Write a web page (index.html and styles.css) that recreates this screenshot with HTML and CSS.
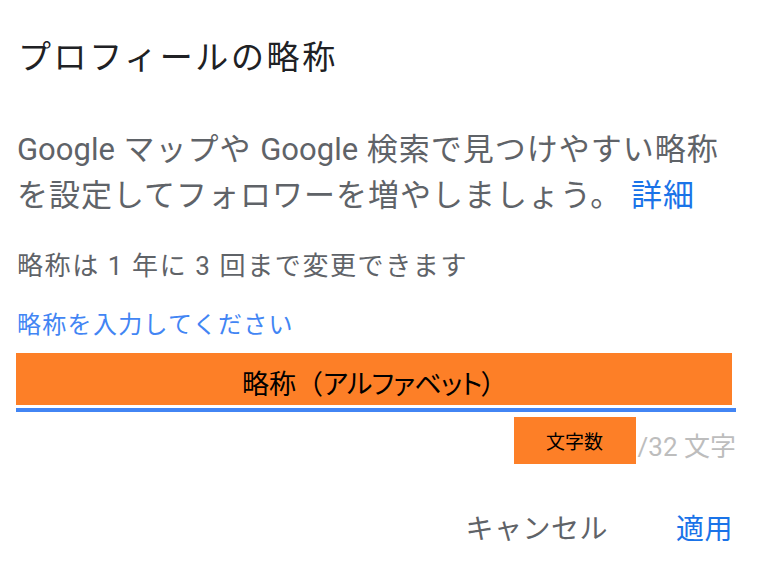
FILE: index.html
```html
<!DOCTYPE html>
<html lang="ja">
<head>
<meta charset="utf-8">
<title>プロフィールの略称</title>
<link rel="stylesheet" href="styles.css">
</head>
<body>
<div class="dialog">
  <h1 class="title">プロフィールの略称</h1>
  <p class="desc"><span class="en">Google</span> マップや <span class="en">Google</span> 検索で見つけやすい略称を設定してフォロワーを増やしましょう。 <a class="link" href="#">詳細</a></p>
  <p class="note">略称は 1 年に 3 回まで変更できます</p>
  <div class="field">
    <div class="label">略称を入力してください</div>
    <div class="input"><span>略称（<span class="kana">アルファベット）</span></span></div>
    <div class="underline"></div>
    <div class="helper">
      <span class="count">文字数</span><span class="max">/32 文字</span>
    </div>
  </div>
  <div class="actions">
    <span class="btn cancel">キャンセル</span>
    <span class="btn apply">適用</span>
  </div>
</div>
</body>
</html>
```

FILE: styles.css
```css
html, body {
  margin: 0;
  padding: 0;
  background: #ffffff;
}
body {
  font-family: Roboto, "Noto Sans CJK JP", sans-serif;
  width: 762px;
  height: 571px;
  overflow: hidden;
}
.dialog {
  display: flex;
  flex-direction: column;
  padding: 36px 26px 0 17px;
}
.title {
  margin: 0 0 0 1px;
  font-size: 33px;
  font-weight: 400;
  color: #202124;
  line-height: 44px;
  letter-spacing: 2.6px;
}
.desc {
  margin: 47px 0 0 0;
  font-size: 31px;
  line-height: 46px;
  color: #5f6368;
  letter-spacing: 1px;
}
.desc .en {
  letter-spacing: 0;
}
.link {
  color: #1a73e8;
  text-decoration: none;
}
.note {
  margin: 31px 0 0 0;
  font-size: 26px;
  line-height: 32px;
  color: #5f6368;
  letter-spacing: 1.6px;
}
.field {
  display: flex;
  flex-direction: column;
  margin-top: 28px;
}
.label {
  font-size: 24px;
  line-height: 30px;
  color: #4285f4;
  letter-spacing: 1.3px;
}
.input {
  margin-top: 13px;
  margin-right: 4px;
  margin-left: -1px;
  height: 52px;
  background: #fd7f27;
  color: #000;
  font-family: "Noto Sans CJK JP", sans-serif;
  font-size: 27px;
  display: flex;
  align-items: center;
  justify-content: center;
  padding-right: 12px;
  padding-top: 6px;
  box-sizing: border-box;
}
.kana {
  font-feature-settings: "palt";
  letter-spacing: -0.8px;
}
.underline {
  margin-top: 3px;
  margin-left: -1px;
  height: 4px;
  background: #4285f4;
}
.helper {
  display: flex;
  justify-content: flex-end;
  align-items: flex-start;
  margin-top: 5px;
}
.count {
  width: 122px;
  height: 47px;
  background: #fd7f27;
  color: #000;
  font-size: 19px;
  display: flex;
  align-items: center;
  justify-content: center;
  margin-right: 2px;
}
.max {
  font-size: 26px;
  line-height: 32px;
  color: #bdbdbd;
  padding-top: 14px;
}
.actions {
  display: flex;
  justify-content: flex-end;
  align-items: center;
  gap: 68px;
  margin-top: 46px;
  padding-right: 3px;
}
.btn {
  font-size: 28px;
  line-height: 40px;
  letter-spacing: 0.5px;
}
.cancel {
  color: #5f6368;
}
.apply {
  color: #1a73e8;
}
```
